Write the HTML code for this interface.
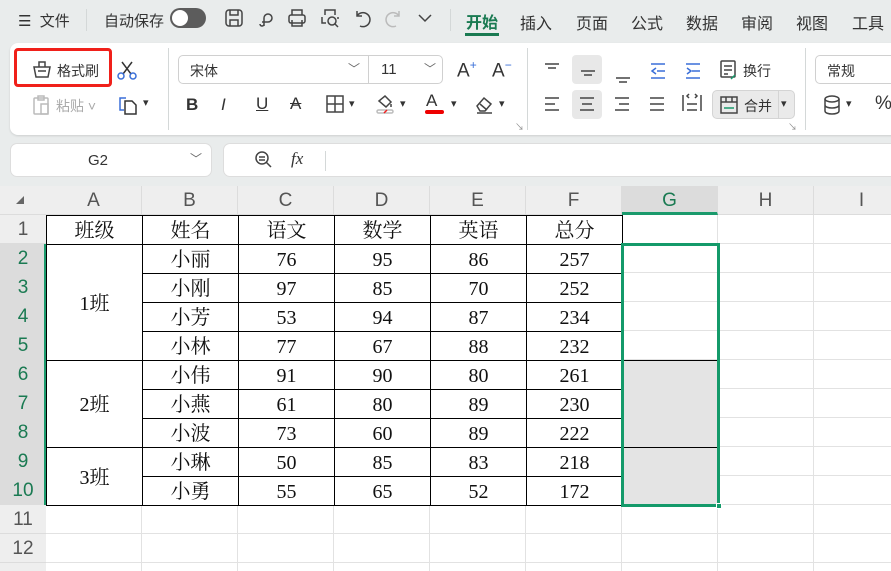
<!DOCTYPE html>
<html style="overflow:hidden;width:891px;height:571px"><head><meta charset="utf-8">
<style>
*{margin:0;padding:0;box-sizing:border-box}
body{width:891px;height:571px;overflow:hidden;background:#e9ecec;font-family:"Liberation Sans","Noto Sans CJK SC",sans-serif;position:relative;color:#222}
.a{position:absolute}
.t{font-size:15px;color:#333;white-space:nowrap}
.ic{position:absolute;stroke:#444;fill:none;stroke-width:1.5}
.sep{position:absolute;width:1px;background:#d4d8d8}
table{border-collapse:collapse;position:absolute;left:46px;top:215px;background:#fff}
td{border:1px solid #000;width:96px;height:29px;text-align:center;padding:3px 0 0 0;line-height:23px;font-family:"Liberation Serif","Noto Serif CJK SC",serif;font-size:20px;color:#111}
.rh{position:absolute;left:0;width:46px;height:29px;text-align:center;line-height:29px;font-size:19px;color:#555;background:#eeeeee;border-bottom:1px solid #dcdcdc}
.ch{position:absolute;top:186px;height:29px;width:96px;text-align:center;line-height:30px;font-size:19px;color:#555;border-right:1px solid #dcdcdc}
</style></head><body>
<div class="a t" style="left:18px;top:10px">☰&nbsp; 文件</div>
<div class="sep" style="left:86px;top:9px;height:22px"></div>
<div class="a t" style="left:104px;top:10px">自动保存</div>
<div class="a" style="left:170px;top:8px;width:36px;height:20px;border-radius:10px;background:#5c5c5c"><div class="a" style="left:2px;top:2px;width:16px;height:16px;border-radius:8px;background:#fff"></div></div>
<svg class="ic" style="left:224px;top:8px" width="20" height="20"><rect x="2" y="2" width="16" height="16" rx="3"/><path d="M6 2v5h8V2M6 18v-6h8v6"/></svg>
<svg class="ic" style="left:256px;top:8px" width="20" height="20"><path d="M8 18v-8a4 4 0 1 1 4 4H6M4 16a2 2 0 1 0 4 0"/></svg>
<svg class="ic" style="left:287px;top:8px" width="20" height="20"><rect x="2" y="7" width="16" height="8" rx="2"/><path d="M5 7V2h10v5M5 12v6h10v-6"/></svg>
<svg class="ic" style="left:320px;top:8px" width="20" height="20"><path d="M5 7V2h10v5M2 9v6h4M18 9v2"/><circle cx="12" cy="13" r="4"/><path d="M15 16l3 3"/></svg>
<svg class="ic" style="left:352px;top:8px" width="20" height="20"><path d="M5 3v5h5M5 8a7 7 0 1 1 3 10"/></svg>
<svg class="ic" style="left:384px;top:8px;stroke:#bbb" width="20" height="20"><path d="M15 3v5h-5M15 8a7 7 0 1 0-3 10"/></svg>
<svg class="ic" style="left:416px;top:10px" width="18" height="16"><path d="M3 5l6 6 6-6"/></svg>
<div class="sep" style="left:450px;top:9px;height:22px"></div>
<div class="a" style="left:466px;top:9px;font-size:16px;font-weight:bold;color:#1a7a52">开始</div>
<div class="a" style="left:465px;top:33px;width:34px;height:3px;background:#1a7a52"></div>
<div class="a t" style="left:520px;top:10px;font-size:16px">插入</div>
<div class="a t" style="left:576px;top:10px;font-size:16px">页面</div>
<div class="a t" style="left:631px;top:10px;font-size:16px">公式</div>
<div class="a t" style="left:686px;top:10px;font-size:16px">数据</div>
<div class="a t" style="left:741px;top:10px;font-size:16px">审阅</div>
<div class="a t" style="left:796px;top:10px;font-size:16px">视图</div>
<div class="a t" style="left:852px;top:10px;font-size:16px">工具</div>
<div class="a" style="left:10px;top:43px;width:900px;height:92px;background:#fff;border-radius:8px;box-shadow:0 1px 2px rgba(0,0,0,.12)"></div>
<div class="a" style="left:14px;top:48px;width:98px;height:39px;border:3px solid #f0201a;border-radius:4px"></div>
<svg class="ic" style="left:31px;top:59px" width="22" height="20"><path d="M3 8h16l-2 10H5zM8 8V3h6v5M7 12h8" /></svg>
<div class="a t" style="left:57px;top:61px;font-size:14px">格式刷</div>
<svg class="ic" style="left:116px;top:60px" width="22" height="22"><path d="M7 14L16 2M15 14L6 2" stroke="#333"/><circle cx="5" cy="16" r="3" stroke="#3a6fd8"/><circle cx="17" cy="16" r="3" stroke="#3a6fd8"/></svg>
<svg class="ic" style="left:32px;top:94px;stroke:#bbb" width="20" height="22"><rect x="2" y="4" width="14" height="16" rx="1"/><rect x="6" y="2" width="6" height="4"/><rect x="9" y="10" width="7" height="10"/></svg>
<div class="a t" style="left:56px;top:96px;font-size:14px;color:#aaa">粘贴 ˅</div>
<svg class="ic" style="left:117px;top:94px;stroke:#3a6fd8" width="22" height="22"><path d="M9 4H3v12h4"/><path d="M8 7h7l4 4v9H8z" stroke="#333"/></svg>
<div class="a t" style="left:143px;top:96px;font-size:11px">▾</div>
<div class="sep" style="left:168px;top:48px;height:82px"></div>
<div class="a" style="left:178px;top:55px;width:265px;height:29px;border:1px solid #d0d0d0;border-radius:5px"></div>
<div class="sep" style="left:368px;top:56px;height:27px;background:#d0d0d0"></div>
<div class="a t" style="left:190px;top:61px;font-size:14px">宋体</div>
<div class="a t" style="left:348px;top:60px;font-size:12px;color:#666">﹀</div>
<div class="a t" style="left:381px;top:61px;font-size:15px">11</div>
<div class="a t" style="left:424px;top:60px;font-size:12px;color:#666">﹀</div>
<div class="a t" style="left:457px;top:58px;font-size:19px">A<sup style="color:#3a6fd8;font-size:12px">+</sup></div>
<div class="a t" style="left:492px;top:58px;font-size:19px">A<sup style="color:#3a6fd8;font-size:12px">−</sup></div>
<div class="a t" style="left:186px;top:95px;font-size:17px;font-weight:bold">B</div>
<div class="a t" style="left:221px;top:95px;font-size:17px;font-style:italic">I</div>
<div class="a t" style="left:256px;top:94px;font-size:17px;text-decoration:underline">U</div>
<div class="a t" style="left:290px;top:94px;font-size:17px;text-decoration:line-through">A</div>
<svg class="ic" style="left:326px;top:95px" width="18" height="18"><rect x="1" y="1" width="16" height="16"/><path d="M9 1v16M1 9h16"/></svg>
<div class="a t" style="left:349px;top:97px;font-size:11px">▾</div>
<svg class="ic" style="left:375px;top:93px" width="20" height="22"><path d="M4 8l6-5 6 6-5 5zM16 11v3"/><rect x="2" y="17" width="16" height="3" rx="1.5" stroke="#bbb"/><path d="M9 20l3-3" stroke="#e22"/></svg>
<div class="a t" style="left:400px;top:97px;font-size:11px">▾</div>
<div class="a t" style="left:426px;top:91px;font-size:17px">A</div>
<div class="a" style="left:425px;top:110px;width:19px;height:4px;background:#e00;border-radius:2px"></div>
<div class="a t" style="left:451px;top:97px;font-size:11px">▾</div>
<svg class="ic" style="left:474px;top:94px" width="22" height="20"><path d="M3 12l7-8 7 6-6 7H6z M6 10l7 6"/><path d="M3 19h15"/></svg>
<div class="a t" style="left:499px;top:97px;font-size:11px">▾</div>
<div class="a t" style="left:515px;top:120px;font-size:9px;color:#888">↘</div>
<div class="sep" style="left:527px;top:48px;height:82px"></div>
<div class="a" style="left:572px;top:55px;width:30px;height:29px;background:#e8e8e8;border-radius:4px"></div>
<div class="a" style="left:572px;top:90px;width:30px;height:29px;background:#e8e8e8;border-radius:4px"></div>
<svg class="ic" style="left:543px;top:60px" width="200" height="58" stroke-width="1.4">
<path d="M2 4h14M5 8h8"/>
<path d="M38 11h14M41 15h8"/>
<path d="M73 18h14M76 22h8"/>
<path d="M108 4h14M108 18h14M114 11h8M113 8l-4 3 4 3" stroke="#3a6fd8"/>
<path d="M143 4h14M143 18h14M149 11h8M144 8l4 3-4 3" stroke="#3a6fd8"/>
<path d="M2 38h14M2 44h10M2 50h14"/>
<path d="M37 38h14M39 44h10M37 50h14"/>
<path d="M72 38h14M76 44h10M72 50h14"/>
<path d="M107 38h14M107 44h14M107 50h14"/>
<path d="M140 35v16M158 35v16M144 44h10M144 50h10M146 38l-2-2 2-2M152 38l2-2-2-2"/>
</svg>
<svg class="ic" style="left:719px;top:59px" width="20" height="22"><rect x="2" y="2" width="14" height="16" rx="1"/><path d="M5 7h8M5 11h8M5 15h4"/><path d="M12 20l4-4" stroke="#1a9a6c"/></svg>
<div class="a t" style="left:743px;top:61px;font-size:14px">换行</div>
<div class="a" style="left:712px;top:90px;width:83px;height:29px;background:#eaeaea;border:1px solid #d4d4d4;border-radius:5px"></div>
<div class="sep" style="left:778px;top:91px;height:27px;background:#d4d4d4"></div>
<svg class="ic" style="left:719px;top:95px" width="20" height="20"><rect x="2" y="2" width="16" height="16"/><path d="M2 7h16M7 2v5M13 2v5"/><path d="M5 13h10" stroke="#1a9a6c"/></svg>
<div class="a t" style="left:744px;top:96px;font-size:14px">合并</div>
<div class="a t" style="left:781px;top:97px;font-size:11px">▾</div>
<div class="a t" style="left:788px;top:120px;font-size:9px;color:#888">↘</div>
<div class="sep" style="left:805px;top:48px;height:82px"></div>
<div class="a" style="left:815px;top:55px;width:90px;height:29px;border:1px solid #d0d0d0;border-radius:5px"></div>
<div class="a t" style="left:827px;top:61px;font-size:14px">常规</div>
<svg class="ic" style="left:823px;top:95px" width="18" height="20"><ellipse cx="9" cy="4" rx="7" ry="3"/><path d="M2 4v12c0 4 14 4 14 0V4M2 10c0 4 14 4 14 0"/></svg>
<div class="a t" style="left:846px;top:97px;font-size:11px">▾</div>
<div class="a t" style="left:875px;top:93px;font-size:19px">%</div>
<div class="a" style="left:10px;top:143px;width:202px;height:34px;background:#fff;border:1px solid #ddd;border-radius:7px"></div>
<div class="a t" style="left:88px;top:152px;font-size:15px">G2</div>
<div class="a t" style="left:190px;top:150px;font-size:12px;color:#666">﹀</div>
<div class="a" style="left:223px;top:143px;width:680px;height:34px;background:#fff;border:1px solid #ddd;border-radius:7px"></div>
<svg class="ic" style="left:254px;top:150px" width="20" height="20"><circle cx="8" cy="8" r="6"/><path d="M5 7h6M5 10h6M12 12l5 5"/></svg>
<div class="a" style="left:291px;top:149px;font-size:17px;font-style:italic;font-family:'Liberation Serif',serif;color:#333">fx</div>
<div class="sep" style="left:325px;top:151px;height:20px"></div>
<div class="a" style="left:0;top:186px;width:891px;height:385px;background:#fff"></div>
<div class="a" style="left:0;top:186px;width:891px;height:29px;background:#eeeeee;border-bottom:1px solid #dcdcdc"></div>
<div class="a" style="left:46px;top:215px;width:845px;height:356px;background-image:repeating-linear-gradient(90deg,transparent 0 95px,#e2e2e2 95px 96px),repeating-linear-gradient(180deg,transparent 0 28px,#e2e2e2 28px 29px)"></div>
<div class="a" style="left:0;top:505px;width:46px;height:66px;background:#eeeeee"></div>
<div class="a" style="left:16px;top:196px;width:0;height:0;border-left:8px solid transparent;border-bottom:8px solid #666"></div>
<div class="ch" style="left:46px">A</div><div class="ch" style="left:142px">B</div><div class="ch" style="left:238px">C</div><div class="ch" style="left:334px">D</div><div class="ch" style="left:430px">E</div><div class="ch" style="left:526px">F</div>
<div class="ch" style="left:622px;background:#dcdcdc;color:#1a7a52;border-bottom:3px solid #1a9a6c">G</div>
<div class="ch" style="left:718px">H</div><div class="ch" style="left:814px">I</div>
<div class="rh" style="top:215px">1</div>
<div class="a" style="left:0;top:244px;width:46px;height:261px;background:#dcdcdc;border-right:2px solid #1a9a6c"></div>
<div class="rh" style="top:244px;background:none;color:#1a7a52;border:0">2</div>
<div class="rh" style="top:273px;background:none;color:#1a7a52;border:0">3</div>
<div class="rh" style="top:302px;background:none;color:#1a7a52;border:0">4</div>
<div class="rh" style="top:331px;background:none;color:#1a7a52;border:0">5</div>
<div class="rh" style="top:360px;background:none;color:#1a7a52;border:0">6</div>
<div class="rh" style="top:389px;background:none;color:#1a7a52;border:0">7</div>
<div class="rh" style="top:418px;background:none;color:#1a7a52;border:0">8</div>
<div class="rh" style="top:447px;background:none;color:#1a7a52;border:0">9</div>
<div class="rh" style="top:476px;background:none;color:#1a7a52;border:0">10</div>
<div class="rh" style="top:505px">11</div>
<div class="rh" style="top:534px">12</div>
<table>
<tr><td>班级</td><td>姓名</td><td>语文</td><td>数学</td><td>英语</td><td>总分</td></tr>
<tr><td rowspan="4">1班</td><td>小丽</td><td>76</td><td>95</td><td>86</td><td>257</td></tr>
<tr><td>小刚</td><td>97</td><td>85</td><td>70</td><td>252</td></tr>
<tr><td>小芳</td><td>53</td><td>94</td><td>87</td><td>234</td></tr>
<tr><td>小林</td><td>77</td><td>67</td><td>88</td><td>232</td></tr>
<tr><td rowspan="3">2班</td><td>小伟</td><td>91</td><td>90</td><td>80</td><td>261</td></tr>
<tr><td>小燕</td><td>61</td><td>80</td><td>89</td><td>230</td></tr>
<tr><td>小波</td><td>73</td><td>60</td><td>89</td><td>222</td></tr>
<tr><td rowspan="2">3班</td><td>小琳</td><td>50</td><td>85</td><td>83</td><td>218</td></tr>
<tr><td>小勇</td><td>55</td><td>65</td><td>52</td><td>172</td></tr>
</table>
<div class="a" style="left:622px;top:360px;width:96px;height:145px;background:#e4e4e4;border-top:1px solid #000;border-right:1px solid #000"></div>
<div class="a" style="left:622px;top:447px;width:96px;height:1px;background:#000"></div>
<div class="a" style="left:621px;top:243px;width:99px;height:264px;border:3px solid #149a6a"></div>
<div class="a" style="left:716px;top:503px;width:6px;height:6px;background:#149a6a;border:1px solid #fff"></div>
</body></html>
